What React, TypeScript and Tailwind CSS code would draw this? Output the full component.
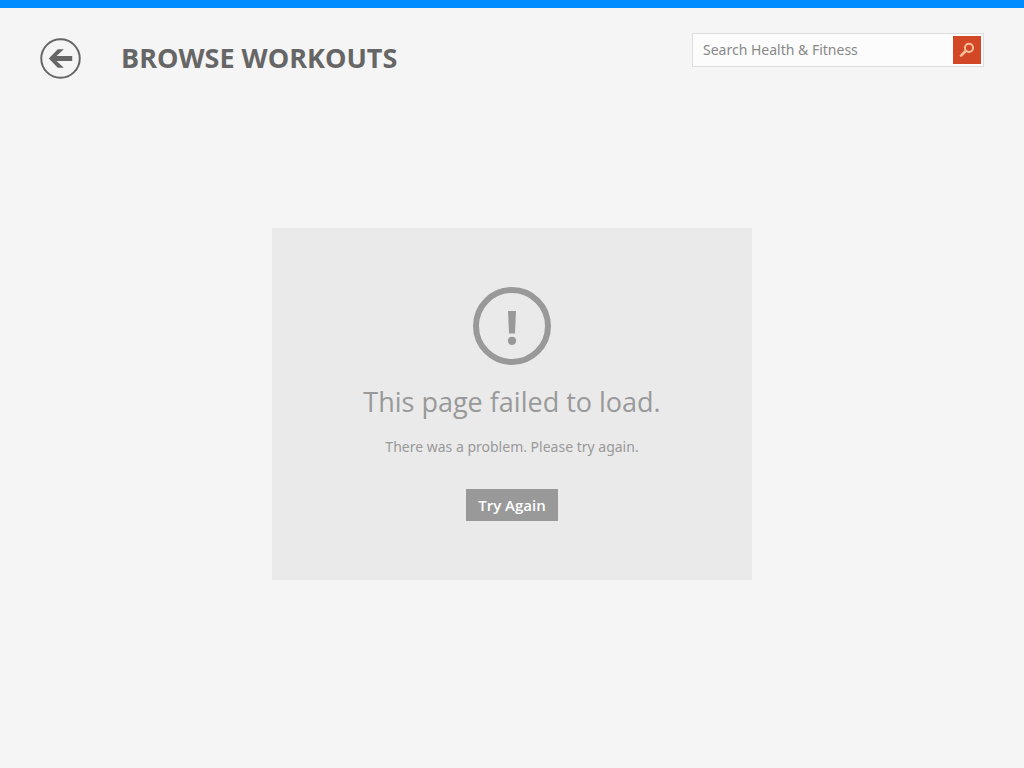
import { useState } from 'react';

const BackIcon = () => (
    <svg viewBox="0 0 42 42" className="w-full h-full" aria-hidden="true">
        <circle cx="21" cy="21" r="19.7" fill="none" stroke="#666666" strokeWidth="2" />
        <path d="M9 21L18.2 11.5H24.4L17 18.4H33V23.6H17L24.4 30.5H18.2Z" fill="#666666" />
    </svg>
);

const SearchIcon = () => (
    <svg viewBox="0 0 28 28" className="w-full h-full" fill="none" stroke="#fbc09a" aria-hidden="true">
        <circle cx="16" cy="11.8" r="4.1" strokeWidth="2" />
        <path d="M12.8 15L8 19.6" strokeWidth="2.6" strokeLinecap="round" />
    </svg>
);

const ErrorIcon = () => (
    <svg viewBox="0 0 78 78" className="w-[78px] h-[78px]" aria-hidden="true">
        <circle cx="39" cy="39" r="36" fill="none" stroke="#999999" strokeWidth="6" />
        <path d="M35 24H43L42 46.5H36Z" fill="#999999" />
        <circle cx="39" cy="53.8" r="4.1" fill="#999999" />
    </svg>
);

const SearchBox = () => {
    const [query, setQuery] = useState('');

    return (
        <form
            role="search"
            onSubmit={(e) => e.preventDefault()}
            className="flex items-center w-73 h-8.5 p-0.5 bg-[#fcfcfc] border border-[#dddddd]"
        >
            <input
                type="text"
                aria-label="Search Health & Fitness"
                placeholder="Search Health & Fitness"
                value={query}
                onChange={(e) => setQuery(e.target.value)}
                className="flex-1 min-w-0 px-2 font-['Noto_Sans',sans-serif] text-[14px] leading-5 text-[#666666] placeholder:text-[#888888] outline-none"
            />
            <button type="submit" aria-label="Search" className="w-7 h-7 bg-[#d24726]">
                <SearchIcon />
            </button>
        </form>
    );
};

export default function App() {
    return (
        <div className="flex flex-col min-h-screen bg-[#f5f5f5] border-t-8 border-[#008cff] font-['Open_Sans',sans-serif]">
            <header className="flex items-start justify-between px-10 pt-[25px]">
                <div className="flex items-center gap-10 pt-[5px]">
                    <button type="button" aria-label="Back" className="w-[41px] h-[41px]">
                        <BackIcon />
                    </button>
                    <h1 className="pb-0.5 text-[27px] leading-9 font-bold text-[#666666]">BROWSE WORKOUTS</h1>
                </div>
                <SearchBox />
            </header>

            <main className="flex justify-center px-10 pt-[149px]">
                <section className="flex flex-col items-center w-full max-w-120 py-[59px] bg-[#eaeaea] text-[#999999]">
                    <ErrorIcon />
                    <h2 className="mt-4 text-[27px] leading-[42px]">This page failed to load.</h2>
                    <p className="mt-3.5 font-['Noto_Sans',sans-serif] text-[14px] leading-5">
                        There was a problem. Please try again.
                    </p>
                    <button type="button" className="h-8 mt-8 px-3 bg-[#999999] text-[15px] leading-5 font-semibold text-white">
                        Try Again
                    </button>
                </section>
            </main>
        </div>
    );
}
